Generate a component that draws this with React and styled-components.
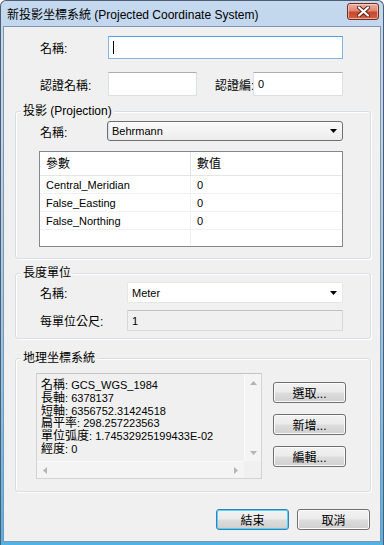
import React from 'react';
import styled, { createGlobalStyle } from 'styled-components';

const GlobalStyle = createGlobalStyle`
  html, body { margin: 0; padding: 0; background: #fff; }
  body {
    font-family: "Liberation Sans", "Noto Sans CJK TC", sans-serif;
    font-size: 11px;
    color: #000;
  }
  * { box-sizing: border-box; }
`;

const Window = styled.div`
  width: 384px;
  height: 545px;
  display: flex;
  flex-direction: column;
  border: 1px solid #4e5d70;
  border-bottom: none;
  border-radius: 6px 6px 0 0;
  background: linear-gradient(180deg, #c4d8ee 0%, #bad2ec 30%, #8ec3ea 70%, #4fb3e8 100%);
  overflow: hidden;
`;

const TitleBar = styled.div`
  height: 25px;
  flex: none;
  display: flex;
  align-items: center;
  justify-content: space-between;
  padding: 0 4px 0 6px;
`;

const TitleText = styled.span`
  font-size: 12px;
  color: #000;
  white-space: nowrap;
`;

const CloseButton = styled.div`
  width: 32px;
  height: 17px;
  margin-top: -4px;
  border: 1px solid #6d2b22;
  border-radius: 3px;
  background: linear-gradient(180deg, #eab1a3 0%, #de8670 45%, #c9472e 55%, #d2603f 100%);
  box-shadow: inset 0 0 0 1px rgba(255, 220, 210, 0.6);
  display: flex;
  align-items: center;
  justify-content: center;
`;

const Client = styled.div`
  flex: 1;
  margin: 0 2px 3px;
  border: 1px solid #7f95ad;
  background: #f0f0f0;
  display: flex;
  flex-direction: column;
`;

const FieldRow = styled.div`
  display: flex;
  align-items: center;
  flex: none;
  height: ${p => p.h}px;
  margin-top: ${p => p.top}px;
  padding-left: ${p => p.indent}px;
`;

const Label = styled.span`
  width: ${p => p.w}px;
  flex: none;
  font-size: 12px;
  white-space: nowrap;
  overflow: hidden;
  margin-left: ${p => p.gap || 0}px;
`;

const TextBox = styled.div`
  position: relative;
  width: ${p => p.w}px;
  height: 100%;
  flex: none;
  background: ${p => (p.disabled ? '#f0f0f0' : '#fff')};
  border: 1px solid ${p => (p.focused ? '#7eb4ea' : p.disabled ? '#d9d9d9' : '#dbdfe6')};
  border-top-color: ${p => (p.focused ? '#569de5' : p.disabled ? '#c2c2c2' : '#abadb3')};
  display: flex;
  align-items: center;
  padding-left: 4px;
  font-size: 11px;
`;

const Caret = styled.span`
  width: 1px;
  height: 13px;
  background: #000;
`;

const Select = styled.div`
  width: ${p => p.w}px;
  height: 100%;
  flex: none;
  display: flex;
  align-items: center;
  justify-content: space-between;
  padding: 0 5px 0 4px;
  font-size: 11px;
  border: 1px solid ${p => (p.flat ? '#e6e6e6' : '#707070')};
  border-radius: ${p => (p.flat ? '1px' : '3px')};
  background: ${p => (p.flat ? '#fff' : 'linear-gradient(180deg, #fafafa 0%, #f4f4f4 50%, #ececec 100%)')};
  box-shadow: ${p => (p.flat ? 'none' : 'inset 1px 0 0 #cfe3f5')};
`;

const DownArrow = () => (
  <svg width="7" height="4" viewBox="0 0 7 4">
    <path d="M0 0h7L3.5 4z" fill="#000" />
  </svg>
);

const Group = styled.div`
  position: relative;
  flex: none;
  margin-top: ${p => p.top}px;
  margin-left: 11px;
  width: 356px;
  height: ${p => p.h}px;
  border: 1px solid #d5dfe5;
  border-radius: 3px;
  box-shadow: inset 1px 1px 0 #fff, 1px 1px 0 #fff;
  padding-top: ${p => p.pt}px;
  display: flex;
  flex-direction: column;
`;

const GroupTitle = styled.span`
  position: absolute;
  top: -8px;
  left: 5px;
  padding: 0 2px;
  background: #f0f0f0;
  font-size: 12px;
  line-height: 14px;
  white-space: nowrap;
`;

const Table = styled.div`
  margin: 10px 0 0 23px;
  width: 304px;
  height: 96px;
  border: 1px solid #828790;
  background: #fff;
  overflow: hidden;
  display: grid;
  grid-template-columns: 151px 1fr;
  grid-template-rows: 24px repeat(4, 18px);
`;

const Cell = styled.div`
  display: flex;
  align-items: center;
  padding: ${p => (p.head ? '0 0 2px 6px' : '1px 0 0 6px')};
  font-size: ${p => (p.head ? '12px' : '11px')};
  border-bottom: 1px solid ${p => (p.head ? '#e5e5e5' : '#f0f0f0')};
  border-right: 1px solid ${p => (p.first ? (p.head ? '#e0e0e0' : '#f0f0f0') : 'transparent')};
  white-space: nowrap;
`;

const GeoBody = styled.div`
  display: flex;
  padding-left: 20px;
`;

const InfoBox = styled.div`
  width: 226px;
  height: 106px;
  flex: none;
  border: 1px solid #d3d3d3;
  border-top-color: #c4c4c4;
  background: #f0f0f0;
  display: grid;
  grid-template-columns: 1fr 17px;
  grid-template-rows: 1fr 17px;
`;

const InfoText = styled.div`
  padding: 5px 0 0 4px;
  font-size: 11px;
  line-height: 12.8px;
  white-space: nowrap;
  overflow: hidden;
`;

const Key = styled.span`
  font-size: 12px;
`;

const ScrollBar = styled.div`
  display: flex;
  flex-direction: ${p => (p.vertical ? 'column' : 'row')};
  justify-content: space-between;
  align-items: center;
  padding: ${p => (p.vertical ? '7px 0 6px' : '0 6px')};
  background: #f4f4f4;
  border-${p => (p.vertical ? 'left' : 'top')}: 1px solid #fafafa;
`;

const Corner = styled.div`
  background: #f0f0f0;
`;

const ScrollArrow = ({ dir }) => {
  const paths = {
    up: 'M0 4L3.5 0L7 4z',
    down: 'M0 0h7L3.5 4z',
    left: 'M4 0v7L0 3.5z',
    right: 'M0 0v7L4 3.5z'
  };
  const wide = dir === 'up' || dir === 'down';
  return (
    <svg width={wide ? 7 : 4} height={wide ? 4 : 7} viewBox={wide ? '0 0 7 4' : '0 0 4 7'}>
      <path d={paths[dir]} fill="#b4b4b4" />
    </svg>
  );
};

const SideButtons = styled.div`
  display: flex;
  flex-direction: column;
  margin: 9px 0 0 11px;
  gap: 11px;
`;

const Button = styled.button`
  width: 73px;
  height: 21px;
  flex: none;
  padding: 0;
  font-family: inherit;
  font-size: 12px;
  color: #000;
  border: 1px solid ${p => (p.primary ? '#3c7fb1' : '#707070')};
  border-radius: 3px;
  background: linear-gradient(180deg, #f2f2f2 0%, #ebebeb 48%, #dddddd 52%, #cfcfcf 100%);
  box-shadow: inset 0 0 0 1px ${p => (p.primary ? '#4fd3fb' : '#fbfbfb')};
  display: flex;
  align-items: center;
  justify-content: center;
`;

const Footer = styled.div`
  display: flex;
  justify-content: flex-end;
  gap: 8px;
  margin-top: 17px;
  padding-right: 10px;
`;

const params = [
  ['Central_Meridian', '0'],
  ['False_Easting', '0'],
  ['False_Northing', '0'],
  ['', '']
];

const geoInfo = [
  ['名稱', 'GCS_WGS_1984'],
  ['長軸', '6378137'],
  ['短軸', '6356752.31424518'],
  ['扁平率', '298.257223563'],
  ['單位弧度', '1.74532925199433E-02'],
  ['經度', '0']
];

export default function App() {
  return (
    <>
      <GlobalStyle />
      <Window>
        <TitleBar>
          <TitleText>新投影坐標系統 (Projected Coordinate System)</TitleText>
          <CloseButton>
            <svg width="13" height="11" viewBox="0 0 13 11">
              <path d="M2 1.5L11 9.5M11 1.5L2 9.5" stroke="#5a1d14" strokeWidth="4" strokeLinecap="round" />
              <path d="M2 1.5L11 9.5M11 1.5L2 9.5" stroke="#fff" strokeWidth="2.2" strokeLinecap="round" />
            </svg>
          </CloseButton>
        </TitleBar>
        <Client>
          <FieldRow top={9} h={23} indent={36}>
            <Label w={68}>名稱:</Label>
            <TextBox w={235} focused>
              <Caret />
            </TextBox>
          </FieldRow>
          <FieldRow top={13} h={24} indent={36}>
            <Label w={68}>認證名稱:</Label>
            <TextBox w={89} />
            <Label w={38} gap={18}>認證編:</Label>
            <TextBox w={90}>0</TextBox>
          </FieldRow>

          <Group top={15} h={148} pt={9}>
            <GroupTitle>投影 (Projection)</GroupTitle>
            <FieldRow top={0} h={20} indent={24}>
              <Label w={67}>名稱:</Label>
              <Select w={236}>
                Behrmann
                <DownArrow />
              </Select>
            </FieldRow>
            <Table>
              <Cell head first>參數</Cell>
              <Cell head>數值</Cell>
              {params.map(([name, value], i) => (
                <React.Fragment key={i}>
                  <Cell first>{name}</Cell>
                  <Cell>{value}</Cell>
                </React.Fragment>
              ))}
            </Table>
          </Group>

          <Group top={14} h={66} pt={8}>
            <GroupTitle>長度單位</GroupTitle>
            <FieldRow top={0} h={21} indent={24}>
              <Label w={87}>名稱:</Label>
              <Select w={216} flat>
                Meter
                <DownArrow />
              </Select>
            </FieldRow>
            <FieldRow top={7} h={21} indent={24}>
              <Label w={87}>每單位公尺:</Label>
              <TextBox w={216} disabled>1</TextBox>
            </FieldRow>
          </Group>

          <Group top={19} h={134} pt={14}>
            <GroupTitle>地理坐標系統</GroupTitle>
            <GeoBody>
              <InfoBox>
                <InfoText>
                  {geoInfo.map(([k, v]) => (
                    <div key={k}>
                      <Key>{k}</Key>: {v}
                    </div>
                  ))}
                </InfoText>
                <ScrollBar vertical>
                  <ScrollArrow dir="up" />
                  <ScrollArrow dir="down" />
                </ScrollBar>
                <ScrollBar>
                  <ScrollArrow dir="left" />
                  <ScrollArrow dir="right" />
                </ScrollBar>
                <Corner />
              </InfoBox>
              <SideButtons>
                <Button>選取...</Button>
                <Button>新增...</Button>
                <Button>編輯...</Button>
              </SideButtons>
            </GeoBody>
          </Group>

          <Footer>
            <Button primary>結束</Button>
            <Button>取消</Button>
          </Footer>
        </Client>
      </Window>
    </>
  );
}
